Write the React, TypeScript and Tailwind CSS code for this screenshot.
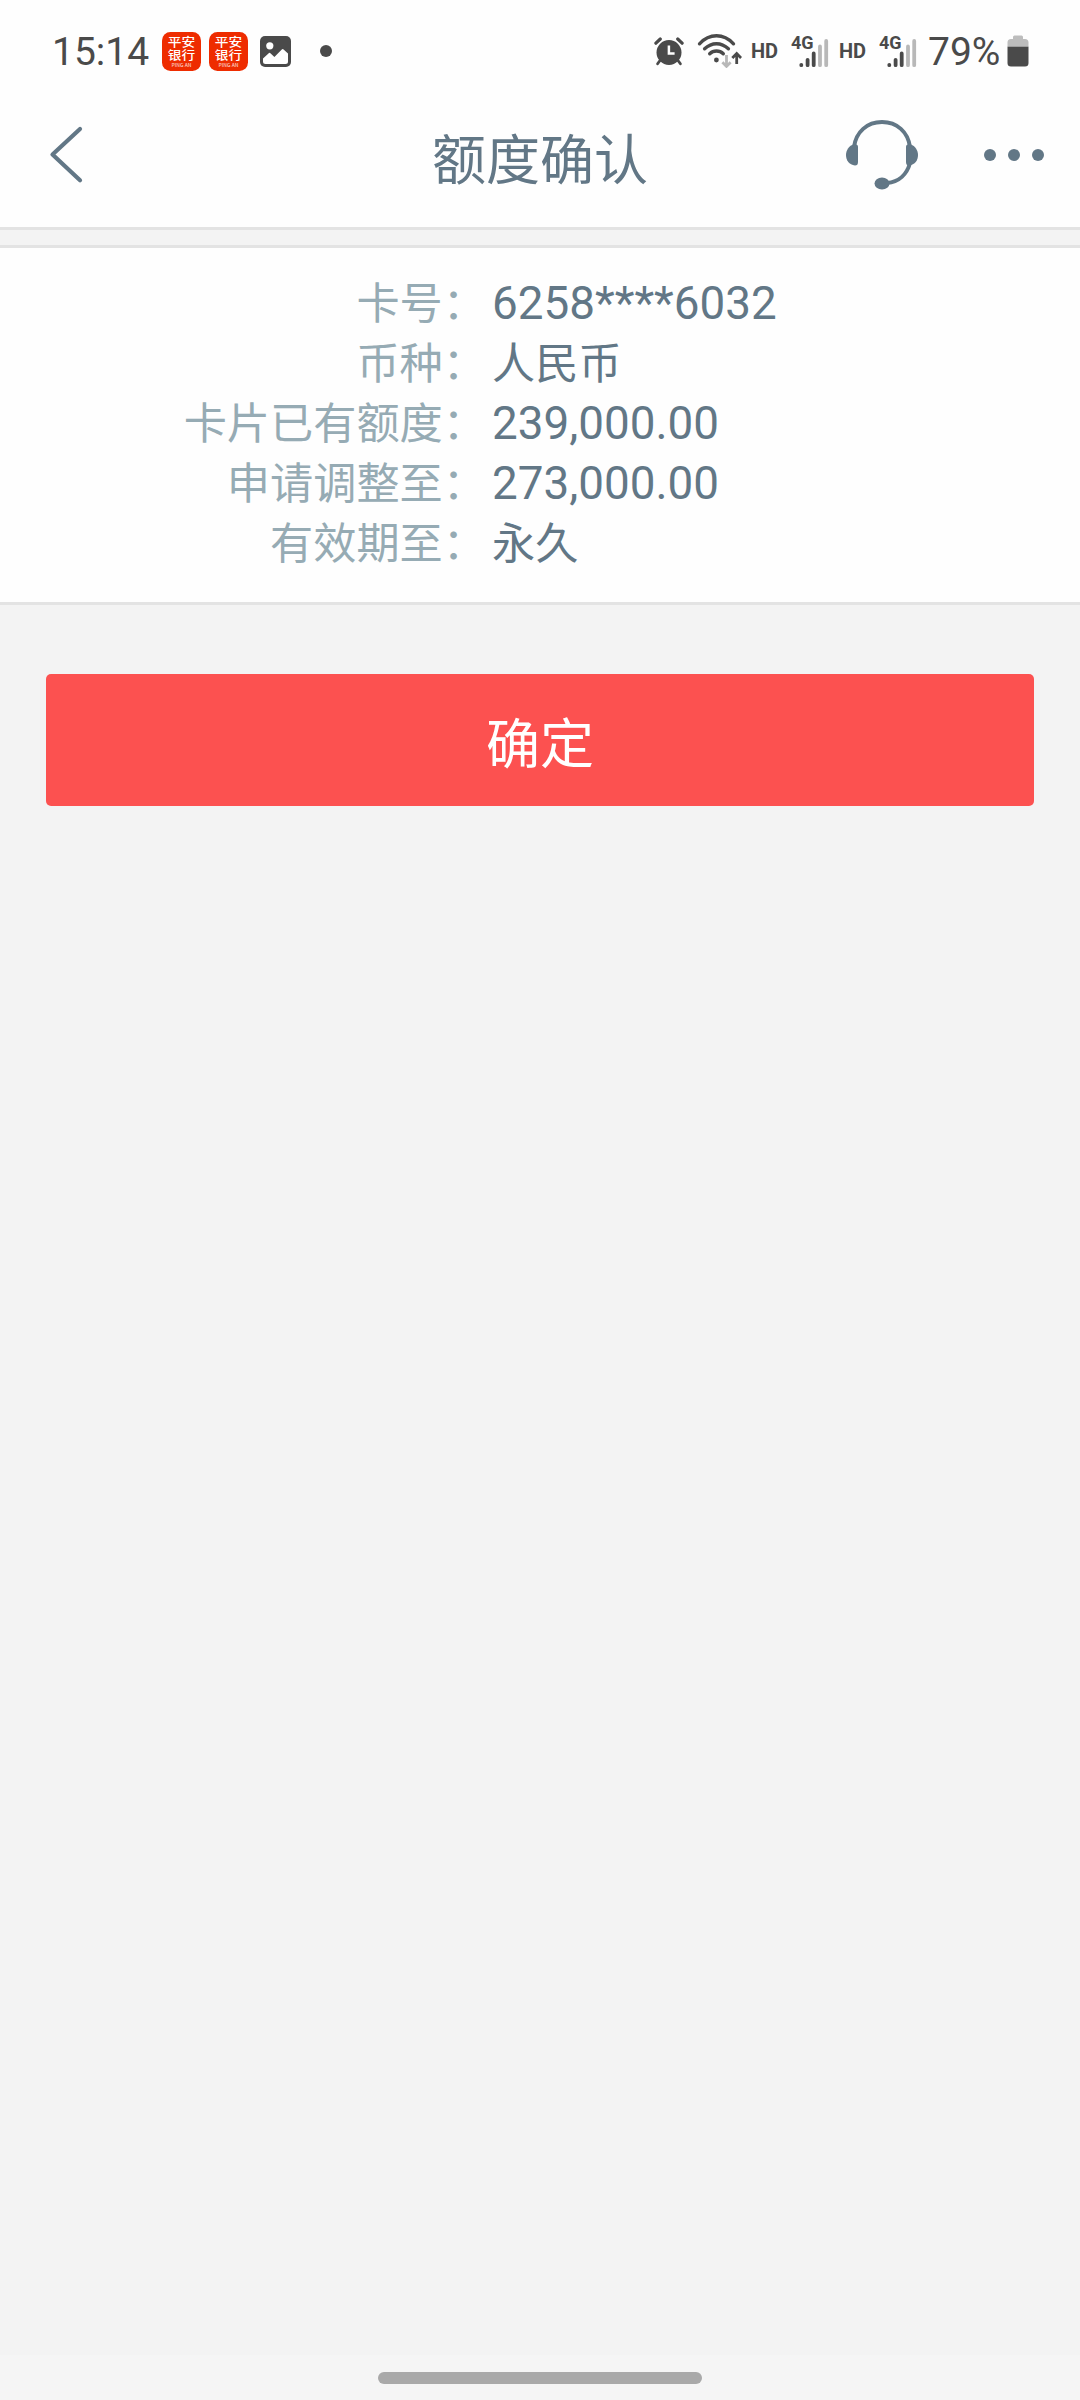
import React from 'react'

const rows = [
  { label: '卡号', value: '6258****6032' },
  { label: '币种', value: '人民币' },
  { label: '卡片已有额度', value: '239,000.00' },
  { label: '申请调整至', value: '273,000.00' },
  { label: '有效期至', value: '永久' },
]

const BankIcon = () => (
  <svg className="h-[39px] w-[39px]" viewBox="0 0 39 39">
    <rect width="39" height="39" rx="8.5" fill="#ee2c00" />
    <g transform="translate(19.5 0) scale(1.14 1)">
      <text fill="#fff" textAnchor="middle" className="font-['Noto_Sans_CJK_SC',sans-serif] font-medium">
        <tspan x="0" y="15.4" fontSize="12">平安</tspan>
        <tspan x="0" y="28.3" fontSize="12">银行</tspan>
        <tspan x="0" y="35" fontSize="4.4" fillOpacity="0.75">PING AN</tspan>
      </text>
    </g>
  </svg>
)

const GalleryIcon = () => (
  <svg className="ml-3 h-[31px] w-[31px]" viewBox="0 0 31 31">
    <rect width="31" height="31" rx="5" fill="#4a4a4a" />
    <circle cx="9.8" cy="9.8" r="3.6" fill="#fff" />
    <path d="M3 22.5 L9 17 Q9.7 16.5 10.4 17.2 L14.4 21 L21.8 13.4 Q22.7 12.6 23.6 13.4 L28 17.5 V25.5 Q28 28 25.5 28 H5.5 Q3 28 3 25.5 Z" fill="#fff" />
  </svg>
)

const AlarmIcon = () => (
  <svg className="h-[29px] w-[30px]" viewBox="0 0 30 29">
    <circle cx="15" cy="15.5" r="12.5" fill="#4a4a4a" />
    <path d="M1.9 6.2 L6.3 2 M28.1 6.2 L23.7 2" stroke="#4a4a4a" strokeWidth="3.2" strokeLinecap="round" />
    <path d="M6 23.5 L3.6 26.8 M24 23.5 L26.4 26.8" stroke="#4a4a4a" strokeWidth="2.8" strokeLinecap="round" />
    <path d="M14.9 8.5 V16.6 H20.6" fill="none" stroke="#fff" strokeWidth="2.5" />
  </svg>
)

const WifiIcon = () => (
  <svg className="ml-[13px] h-[34px] w-[45px]" viewBox="0 0 45 34">
    <g fill="none" stroke="#4a4a4a" strokeWidth="3.4" strokeLinecap="round">
      <path d="M2.5 9.8 Q10 1.8 19.5 1.8 Q29 1.8 36.5 9.8" />
      <path d="M7.6 14.8 Q13 9.7 19.5 9.7 Q26 9.7 31.4 14.8" />
      <path d="M12.7 19.8 Q15.5 17 19.5 17 Q23.5 17 26.3 19.8" />
    </g>
    <circle cx="19.4" cy="26" r="2.4" fill="#4a4a4a" />
    <path d="M29.5 21 V32 M25.4 28.3 L29.5 32.4 L33.6 28.3" fill="none" stroke="#b8b8b8" strokeWidth="2.8" />
    <path d="M39.7 30 V20 M35.3 24 L39.7 19.6 L44.1 24" fill="none" stroke="#4a4a4a" strokeWidth="2.8" />
  </svg>
)

const SignalIcon = () => (
  <svg className="ml-[12px] h-[46px] w-[39px]" viewBox="0 -6 39 46">
    <text x="0" y="14.5" fontSize="18" fill="#4a4a4a" className="font-['Roboto',sans-serif] font-bold">4G</text>
    <g strokeWidth="3.8" strokeLinecap="round" stroke="#4a4a4a">
      <path d="M10.3 30.8 V31.2 M16.6 25.8 V31.2 M22.7 19.5 V31.2" />
      <path d="M29 12.5 V31.2 M35.2 6.9 V31.2" stroke="#b8b8b8" />
    </g>
  </svg>
)

const BatteryIcon = () => (
  <svg className="ml-[7px] h-[32px] w-[22px]" viewBox="0 0 22 32">
    <path d="M6 4 V2 Q6 0.5 7.5 0.5 H14.5 Q16 0.5 16 2 V4 H18 Q21.5 4 21.5 7.5 V12 H0.5 V7.5 Q0.5 4 4 4 Z" fill="#bdbdbd" />
    <path d="M0.5 11.7 H21.5 V28 Q21.5 31.5 18 31.5 H4 Q0.5 31.5 0.5 28 Z" fill="#4a4a4a" />
  </svg>
)

const StatusBar = () => (
  <div className="flex h-[102px] items-center text-[#4a4a4a]">
    <div className="flex flex-1 items-center pl-[52px]">
      <span className="w-[110px] pt-px text-[39px] leading-[46px]">15:14</span>
      <div className="flex gap-2">
        <BankIcon />
        <BankIcon />
      </div>
      <GalleryIcon />
      <span className="ml-[29px] h-3 w-3 rounded-full bg-[#4a4a4a]" />
    </div>
    <div className="flex items-center pr-[51px]">
      <AlarmIcon />
      <WifiIcon />
      <span className="ml-[9px] w-[28px] text-[20px] leading-[24px] font-bold">HD</span>
      <SignalIcon />
      <span className="ml-[9px] w-[28px] text-[20px] leading-[24px] font-bold">HD</span>
      <SignalIcon />
      <span className="ml-[10px] w-[72px] pt-px text-[39px] leading-[46px]">79%</span>
      <BatteryIcon />
    </div>
  </div>
)

const Header = () => (
  <header className="flex h-[128px] items-center border-b-[3px] border-[#e3e3e3] text-[#627786]">
    <div className="w-[432px] pl-[49px]">
      <svg className="mb-[19px] h-[58px] w-[34px]" viewBox="0 0 34 58">
        <path d="M31 3 L3.5 28.5 L31 54.3" fill="none" stroke="currentColor" strokeWidth="4.2" strokeLinecap="round" strokeLinejoin="round" />
      </svg>
    </div>
    <h1 className="w-[216px] pb-[5px] text-[54px] leading-[80px]">额度确认</h1>
    <div className="flex w-[432px] items-center justify-end pr-[36px] pb-[19px]">
      <svg className="h-[70px] w-[72px]" viewBox="0 0 72 70">
        <g fill="none" stroke="currentColor" strokeWidth="4">
          <path d="M8 27 C10 12 21 2 36 2 C51 2 62 12 64 27" />
          <path d="M64 43 C61 54 53 62 41 63" />
        </g>
        <path d="M12 27 V42 Q12 45.5 9 45.5 C3 45 0 40 0 35 C0 30 3 26 7 24.5 Q12 23.5 12 27 Z" fill="currentColor" />
        <path d="M60 27 V42 Q60 45.5 63 45.5 C69 45 72 40 72 35 C72 30 69 26 65 24.5 Q60 23.5 60 27 Z" fill="currentColor" />
        <ellipse cx="36" cy="63.5" rx="7.5" ry="6" fill="currentColor" />
      </svg>
      <div className="ml-[66px] flex gap-3">
        <span className="h-3 w-3 rounded-full bg-[#627786]" />
        <span className="h-3 w-3 rounded-full bg-[#627786]" />
        <span className="h-3 w-3 rounded-full bg-[#627786]" />
      </div>
    </div>
  </header>
)

const App = () => {
  return (
    <div className="flex h-[2400px] w-[1080px] flex-col overflow-hidden bg-[#f3f3f3] font-['Roboto','Noto_Sans_CJK_SC',sans-serif]">
      <div className="bg-[#fefefe]">
        <StatusBar />
        <Header />
      </div>

      <section className="mt-[15px] h-[360px] border-y-[3px] border-[#e3e3e3] bg-[#fefefe] pt-[25px]">
        {rows.map((row) => (
          <div key={row.label} className="flex h-[60px] items-center leading-[60px]">
            <span className="w-[486px] pt-[3px] text-right text-[43.2px] text-[#96abb4]">{row.label}：</span>
            {/\d/.test(row.value) ? (
              <span className="pt-[2px] pl-[6px] text-[45.8px] text-[#627786]">{row.value}</span>
            ) : (
              <span className="pt-[3px] pl-[6px] text-[43.2px] text-[#627786]">{row.value}</span>
            )}
          </div>
        ))}
      </section>

      <main className="flex-1 px-[46px] pt-[69px]">
        <button className="h-[132px] w-full rounded-[5px] bg-[#fc5150] pt-[11px] text-[54px] leading-[80px] text-white">确定</button>
      </main>

      <div className="flex h-[45px] justify-center bg-[#f5f5f5] pt-[17px]">
        <div className="h-3 w-[324px] rounded-full bg-[#a9a9a9]" />
      </div>
    </div>
  )
}

export default App
